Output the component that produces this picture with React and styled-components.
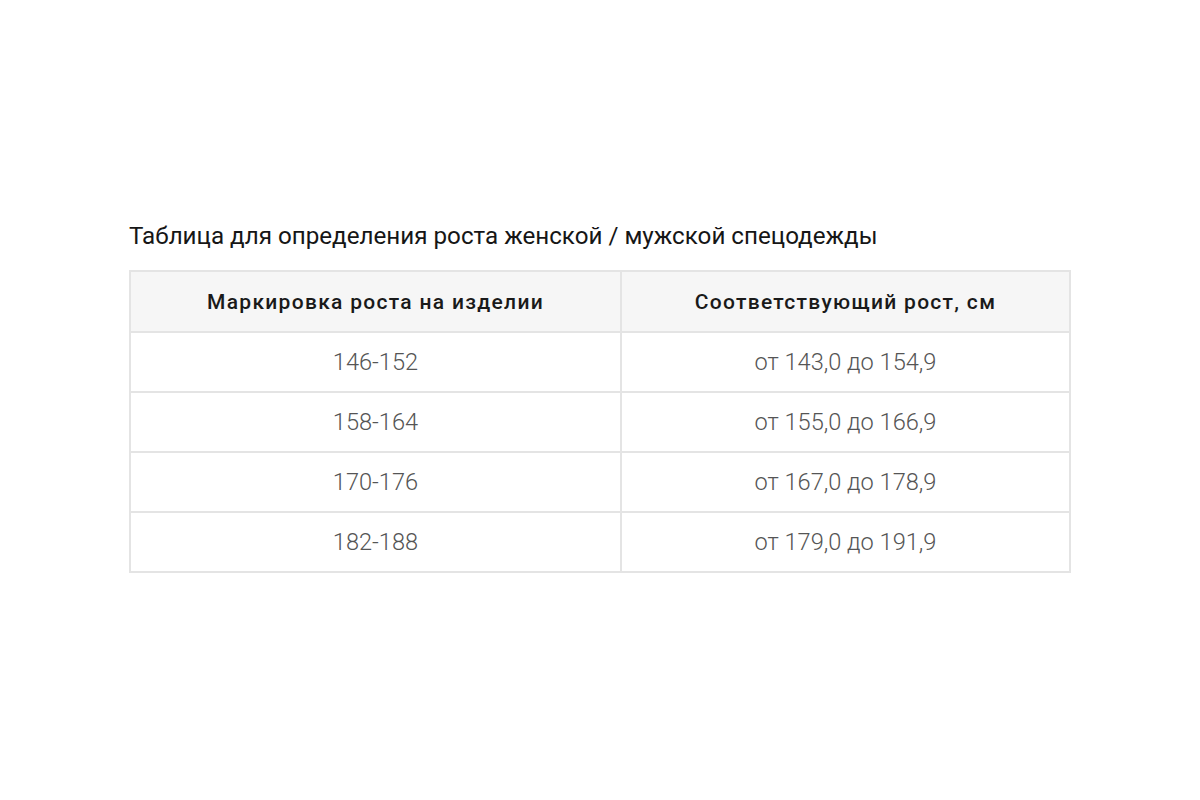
import React from "react";
import styled, { createGlobalStyle } from "styled-components";

const Global = createGlobalStyle`
  html, body { margin: 0; padding: 0; background: #fff; }
  body { font-family: Roboto, "Liberation Sans", sans-serif; }
`;

const Page = styled.div`
  width: 1200px;
  height: 800px;
  box-sizing: border-box;
  padding: 219px 0 0 129px;
`;

const Title = styled.h2`
  margin: 0 0 17px 0;
  font-family: Roboto, "Liberation Sans", sans-serif;
  font-weight: 400;
  font-size: 24.2px;
  line-height: 34px;
  color: #161616;
`;

const Table = styled.table`
  border-collapse: collapse;
  width: 940px;
  table-layout: fixed;
`;

const Th = styled.th`
  height: 61px;
  box-sizing: border-box;
  border: 2px solid #e4e4e4;
  background: #f6f6f6;
  font-family: Roboto, "Open Sans", sans-serif;
  font-weight: 500;
  font-size: 21px;
  letter-spacing: 1.3px;
  color: #1a1a1a;
  text-align: center;
  padding: 0;
`;

const Td = styled.td`
  height: 60px;
  box-sizing: border-box;
  border: 2px solid #e4e4e4;
  background: #fff;
  font-family: Roboto, sans-serif;
  font-weight: 300;
  font-size: 23.6px;
  color: #555;
  text-align: center;
  padding: 0;
`;

const rows = [
  ["146-152", "от 143,0 до 154,9"],
  ["158-164", "от 155,0 до 166,9"],
  ["170-176", "от 167,0 до 178,9"],
  ["182-188", "от 179,0 до 191,9"],
];

export default function App() {
  return (
    <Page>
      <Global />
      <Title>Таблица для определения роста женской / мужской спецодежды</Title>
      <Table>
        <colgroup>
          <col style={{ width: "491px" }} />
          <col style={{ width: "449px" }} />
        </colgroup>
        <thead>
          <tr>
            <Th>Маркировка роста на изделии</Th>
            <Th>Соответствующий рост, см</Th>
          </tr>
        </thead>
        <tbody>
          {rows.map((r) => (
            <tr key={r[0]}>
              <Td>{r[0]}</Td>
              <Td>{r[1]}</Td>
            </tr>
          ))}
        </tbody>
      </Table>
    </Page>
  );
}
